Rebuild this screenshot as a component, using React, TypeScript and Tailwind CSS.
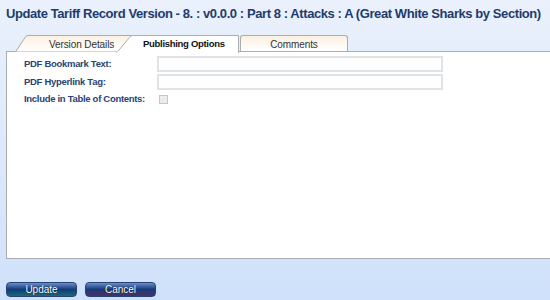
import React from "react";

const tabFont = { fontFamily: '"Liberation Sans", Arial, sans-serif' };

function Tab1() {
  return (
    <div className="relative w-[118px] h-[17px] shrink-0">
      <svg className="absolute inset-0" width="118" height="17" viewBox="0 0 118 17">
        <defs>
          <linearGradient id="t1" x1="0" y1="0" x2="0" y2="1">
            <stop offset="0" stopColor="#fbf0e2" />
            <stop offset="1" stopColor="#ffffff" />
          </linearGradient>
        </defs>
        <path d="M0.5,17 L10,2.5 Q11,0.5 13,0.5 L117.5,0.5 L117.5,17 Z" fill="url(#t1)" stroke="#a9acb0" strokeWidth="1" />
      </svg>
      <div className="relative h-full flex items-center pl-[34px] pt-[1px] text-[10px] tracking-[-0.1px] text-[#333] whitespace-nowrap" style={tabFont}>
        Version Details
      </div>
    </div>
  );
}

function Tab2() {
  return (
    <div className="relative w-[123px] h-[17px] shrink-0 ml-[-17px] z-10">
      <svg className="absolute inset-0" width="123" height="18" viewBox="0 0 123 18">
        <path d="M0.5,18 L13.5,2.5 Q14.5,0.5 16.5,0.5 L122.5,0.5 L122.5,18" fill="#ffffff" stroke="#a9acb0" strokeWidth="1" />
        <rect x="1.5" y="16" width="120.5" height="2" fill="#ffffff" />
      </svg>
      <div className="relative h-full flex items-center pl-[27px] pt-[1px] text-[9.5px] tracking-[-0.3px] font-bold text-[#111] whitespace-nowrap" style={tabFont}>
        Publishing Options
      </div>
    </div>
  );
}

function Tab3() {
  return (
    <div
      className="w-[108px] h-[16px] shrink-0 ml-[1px] mb-[1px] border border-[#a9acb0] border-b-0 rounded-t-[3px] bg-gradient-to-b from-[#fbf0e2] to-[#ffffff] flex items-center justify-center pt-[1px] text-[10px] tracking-[-0.1px] text-[#333] whitespace-nowrap"
      style={tabFont}
    >
      Comments
    </div>
  );
}

export default function App() {
  const labelCls = "w-[133px] shrink-0 text-[9.5px] tracking-[-0.3px] font-bold text-[#2b4373] whitespace-nowrap";
  return (
    <div
      className="w-[550px] h-[300px] overflow-hidden flex flex-col bg-gradient-to-b from-[#eaf1fc] to-[#cfe1fa]"
      style={{ fontFamily: '"Liberation Sans", Arial, sans-serif' }}
    >
      <div className="pl-[6px] pt-[4px] h-[35px] text-[13px] tracking-[-0.42px] font-bold text-[#1f3b6e] whitespace-nowrap">
        Update Tariff Record Version - 8. : v0.0.0 : Part 8 : Attacks : A (Great White Sharks by Section)
      </div>
      <div className="flex items-end pl-[15px] h-[17px]">
        <Tab1 />
        <Tab2 />
        <Tab3 />
      </div>
      <div className="ml-[6px] mt-[-1px] w-[560px] h-[208px] bg-white border border-[#a9acb0] flex flex-col pl-[17px] pt-[4px] gap-[2px]">
        <div className="flex items-center h-[16px]">
          <div className={labelCls}>PDF Bookmark Text:</div>
          <div className="w-[286px] h-[16px] border-2 border-[#e0e3e6] bg-[#fefefe]" />
        </div>
        <div className="flex items-center h-[16px]">
          <div className={labelCls}>PDF Hyperlink Tag:</div>
          <div className="w-[286px] h-[16px] border-2 border-[#e0e3e6] bg-[#fefefe]" />
        </div>
        <div className="flex items-center h-[14px]">
          <div className={labelCls}>Include in Table of Contents:</div>
          <div className="ml-[2px] w-[9px] h-[9px] border border-[#c4c6c9] bg-[#ececec]" />
        </div>
      </div>
      <div className="flex gap-[8px] pl-[6px] mt-[23px]">
        {["Update", "Cancel"].map((t, i) => (
          <div
            key={t}
            className={
              "w-[71px] h-[15px] rounded-[4px] border border-[#27427a] flex items-center justify-center text-[10px] text-white " +
              (i === 0
                ? "bg-gradient-to-b from-[#6d8ec9] via-[#143a7c] to-[#1e6a6a]"
                : "bg-gradient-to-b from-[#6d8ec9] via-[#143a7c] to-[#4a3060]")
            }
            style={{ textShadow: "0 0 1px #000" }}
          >
            {t}
          </div>
        ))}
      </div>
    </div>
  );
}
